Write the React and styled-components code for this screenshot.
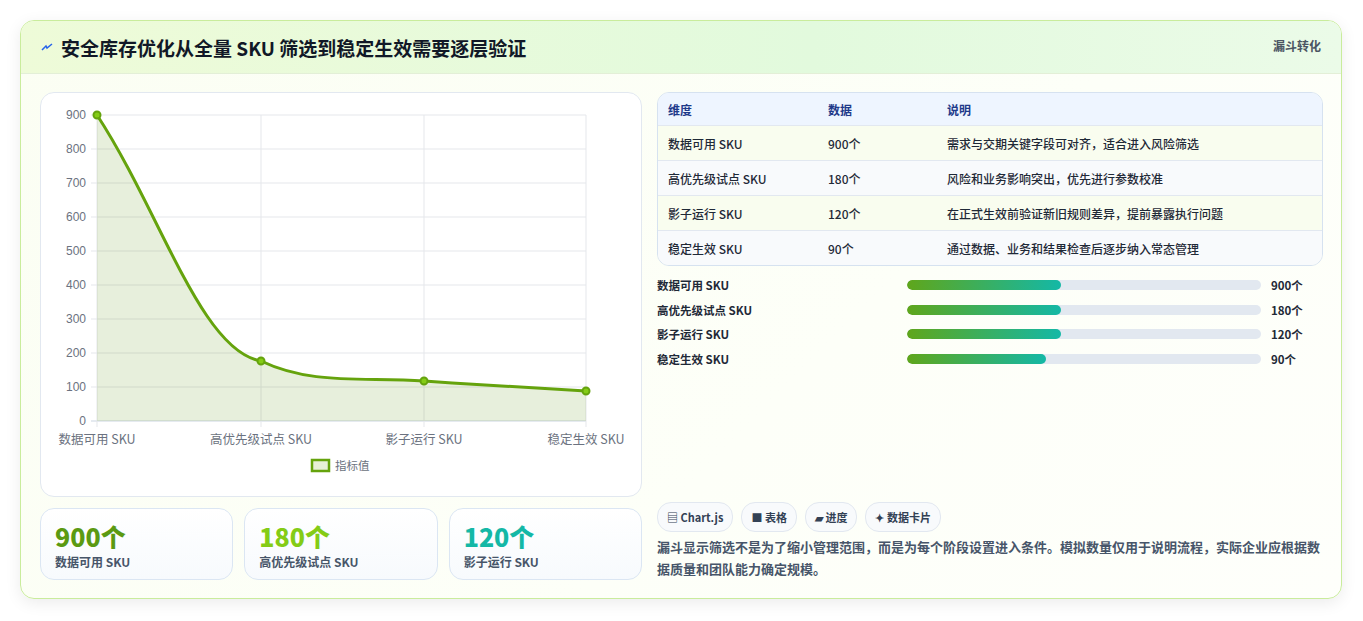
import styled, { createGlobalStyle } from "styled-components";

const Global = createGlobalStyle`
  body { margin: 0; background: #f3f4f6; font-family: "Noto Sans CJK SC", "Noto Sans", sans-serif; }
`;

const Page = styled.div`
  width: 1363px;
  height: 621px;
  padding: 20px;
  box-sizing: border-box;
  background: #fff;
`;

const Card = styled.div`
  width: 1322px;
  height: 579px;
  box-sizing: border-box;
  border: 1px solid #c9ec9c;
  border-radius: 14px;
  overflow: hidden;
  background: linear-gradient(135deg, #fbfef3, #fdfff8 60%, #fefffb);
  box-shadow: 0 4px 16px rgba(0, 0, 0, 0.08);
  display: flex;
  flex-direction: column;
`;

const Header = styled.div`
  height: 54px;
  display: flex;
  align-items: center;
  justify-content: space-between;
  padding: 0 20px;
  background: linear-gradient(90deg, #eefbd8, #e2fadd 60%, #ebfbe8);
  border-bottom: 1px solid #e3efd7;
`;

const Title = styled.h1`
  margin: 0;
  font-size: 19px;
  font-weight: 700;
  color: #111827;
  display: flex;
  align-items: center;
  gap: 8px;
`;

const Tag = styled.span`
  align-self: flex-start;
  margin-top: 16px;
  font-size: 12px;
  font-weight: 700;
  color: #4b5563;
`;

const Body = styled.div`
  flex: 1;
  display: grid;
  grid-template-columns: 602px 666px;
  gap: 15px;
  padding: 18px 19px 18px 19px;
`;

const Col = styled.div`
  display: flex;
  flex-direction: column;
`;

const ChartBox = styled.div`
  height: 403px;
  border: 1px solid #e2e8f0;
  border-radius: 14px;
  background: #fff;
`;

const Stats = styled.div`
  margin-top: 11px;
  display: grid;
  grid-template-columns: repeat(3, 1fr);
  gap: 11px;
`;

const Stat = styled.div`
  height: 72px;
  border: 1px solid #dbe6f3;
  border-radius: 14px;
  background: linear-gradient(180deg, #fff, #f7fafd);
  padding: 12px 14px;
  box-sizing: border-box;
`;

const StatValue = styled.div`
  font-size: 25px;
  font-weight: 800;
  line-height: 30px;
  color: ${(p) => p.$c};
`;

const StatLabel = styled.div`
  font-size: 12px;
  font-weight: 700;
  color: #475569;
  margin-top: 2px;
`;

const Table = styled.div`
  border: 1px solid #d6e2f0;
  border-radius: 12px;
  overflow: hidden;
  font-size: 12px;
`;

const Row = styled.div`
  display: grid;
  grid-template-columns: 160px 119px 1fr;
  height: ${(p) => (p.$head ? 32 : 34)}px;
  align-items: center;
  padding-left: 10px;
  background: ${(p) => (p.$head ? "#eef5ff" : p.$alt ? "#f8fafc" : "#f9fdef")};
  border-top: ${(p) => (p.$head ? "none" : "1px solid #e2e8f0")};
  color: ${(p) => (p.$head ? "#1e3a8a" : "#1f2937")};
  font-weight: ${(p) => (p.$head ? 700 : 500)};
`;

const Bars = styled.div`
  margin-top: 11px;
  display: flex;
  flex-direction: column;
  gap: 8.5px;
`;

const BarRow = styled.div`
  display: grid;
  grid-template-columns: 250px 344px 1fr;
  gap: 10px;
  align-items: center;
  font-size: 11.5px;
  font-weight: 700;
  color: #1f2937;
  height: 16px;
`;

const Track = styled.div`
  height: 10px;
  border-radius: 5px;
  background: #e2e8f0;
  margin-left: -10px;
  overflow: hidden;
`;

const Fill = styled.div`
  height: 100%;
  border-radius: 5px;
  background: linear-gradient(90deg, #5fa61b, #14b8a6);
`;

const Chips = styled.div`
  margin-top: auto;
  display: flex;
  gap: 8px;
`;

const Chip = styled.span`
  height: 28px;
  padding: 0 9px;
  display: flex;
  align-items: center;
  gap: 3px;
  border: 1px solid #e2e8f0;
  border-radius: 14px;
  background: #f8fafc;
  font-size: 11px;
  font-weight: 700;
  color: #334155;
`;

const Note = styled.p`
  margin: 4px 0 0;
  font-size: 13px;
  line-height: 22px;
  font-weight: 600;
  color: #475569;
`;

const tableRows = [
  ["数据可用 SKU", "900个", "需求与交期关键字段可对齐，适合进入风险筛选"],
  ["高优先级试点 SKU", "180个", "风险和业务影响突出，优先进行参数校准"],
  ["影子运行 SKU", "120个", "在正式生效前验证新旧规则差异，提前暴露执行问题"],
  ["稳定生效 SKU", "90个", "通过数据、业务和结果检查后逐步纳入常态管理"],
];

const bars = [
  ["数据可用 SKU", 43.6, "900个"],
  ["高优先级试点 SKU", 43.6, "180个"],
  ["影子运行 SKU", 43.6, "120个"],
  ["稳定生效 SKU", 39.2, "90个"],
];

function Chart() {
  const xs = [56, 220, 383, 545];
  const ys = Array.from({ length: 10 }, (_, i) => 22 + i * 34);
  const labels = ["数据可用 SKU", "高优先级试点 SKU", "影子运行 SKU", "稳定生效 SKU"];
  const pts = [[56, 22], [220, 268], [383, 288], [545, 298]];
  const line = "M56,22 C120,120 160,258 220,268 C270,292 320,284 383,288 C440,292 500,295 545,298";
  return (
    <svg width="602" height="403" style={{ display: "block" }}>
      {ys.map((y, i) => (
        <g key={y}>
          <line x1="50" x2="545" y1={y} y2={y} stroke={i === 9 ? "#cbd5e1" : "#e5e7eb"} />
          <text x="45" y={y + 4} fontSize="12" fill="#6b7280" textAnchor="end" fontFamily="Liberation Sans, sans-serif">
            {900 - i * 100}
          </text>
        </g>
      ))}
      {xs.map((x) => (
        <line key={x} x1={x} x2={x} y1="22" y2="334" stroke="#e5e7eb" />
      ))}
      <path d={line + " L545,328 L56,328 Z"} fill="rgba(95,150,20,0.15)" />
      <path d={line} fill="none" stroke="#65a30d" strokeWidth="3" />
      {pts.map(([x, y]) => (
        <circle key={x} cx={x} cy={y} r="3.5" fill="#84cc16" stroke="#65a30d" strokeWidth="2" />
      ))}
      {labels.map((l, i) => (
        <text key={l} x={xs[i]} y="351" fontSize="12.5" fill="#6b7280" textAnchor="middle">
          {l}
        </text>
      ))}
      <rect x="271" y="367" width="17" height="11" fill="#e7f0d8" stroke="#65a30d" strokeWidth="2.5" />
      <text x="294" y="377" fontSize="11.5" fill="#6b7280">指标值</text>
    </svg>
  );
}

export default function App() {
  return (
    <Page>
      <Global />
      <Card>
        <Header>
          <Title>
            <svg width="12" height="10" viewBox="0 0 12 10">
              <path d="M1 8 L5 4 L6 6 L11 2" fill="none" stroke="#2563eb" strokeWidth="1.5" />
            </svg>
            安全库存优化从全量 SKU 筛选到稳定生效需要逐层验证
          </Title>
          <Tag>漏斗转化</Tag>
        </Header>
        <Body>
          <Col>
            <ChartBox>
              <Chart />
            </ChartBox>
            <Stats>
              <Stat>
                <StatValue $c="#5b9a12">900个</StatValue>
                <StatLabel>数据可用 SKU</StatLabel>
              </Stat>
              <Stat>
                <StatValue $c="#84cc16">180个</StatValue>
                <StatLabel>高优先级试点 SKU</StatLabel>
              </Stat>
              <Stat>
                <StatValue $c="#14b8a6">120个</StatValue>
                <StatLabel>影子运行 SKU</StatLabel>
              </Stat>
            </Stats>
          </Col>
          <Col>
            <Table>
              <Row $head>
                <span>维度</span>
                <span>数据</span>
                <span>说明</span>
              </Row>
              {tableRows.map((r, i) => (
                <Row key={r[0]} $alt={i % 2 === 1}>
                  {r.map((c) => (
                    <span key={c}>{c}</span>
                  ))}
                </Row>
              ))}
            </Table>
            <Bars>
              {bars.map(([l, w, v]) => (
                <BarRow key={l}>
                  <span>{l}</span>
                  <Track>
                    <Fill style={{ width: `${w}%` }} />
                  </Track>
                  <span>{v}</span>
                </BarRow>
              ))}
            </Bars>
            <Chips>
              <Chip>▤ Chart.js</Chip>
              <Chip>■ 表格</Chip>
              <Chip>▰ 进度</Chip>
              <Chip>✦ 数据卡片</Chip>
            </Chips>
            <Note>
              漏斗显示筛选不是为了缩小管理范围，而是为每个阶段设置进入条件。模拟数量仅用于说明流程，实际企业应根据数据质量和团队能力确定规模。
            </Note>
          </Col>
        </Body>
      </Card>
    </Page>
  );
}
